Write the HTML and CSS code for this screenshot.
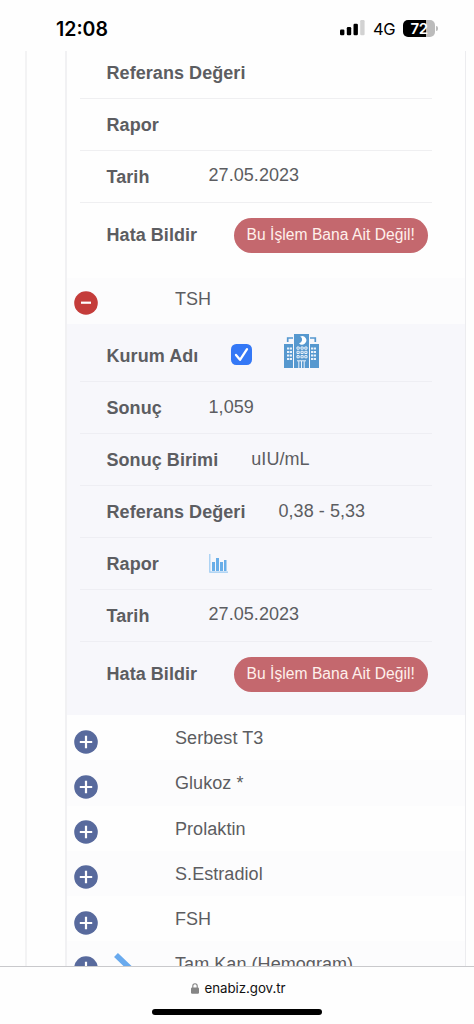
FILE: index.html
```html
<!DOCTYPE html>
<html lang="tr">
<head>
<meta charset="utf-8">
<title>e-Nabız</title>
<link rel="stylesheet" href="styles.css">
</head>
<body>
<svg class="defs" width="0" height="0">
  <symbol id="plus" viewBox="0 0 24 24"><circle cx="12" cy="12" r="11.8" fill="#586a9d"/><path d="M12 5.8v12.4M5.8 12h12.4" stroke="#fff" stroke-width="2.2"/></symbol>
  <symbol id="minus" viewBox="0 0 24 24"><circle cx="12" cy="12" r="11.8" fill="#c43c3a"/><path d="M7 11.7h10" stroke="#fff" stroke-width="2.2"/></symbol>
</svg>
<div class="phone">
  <header class="status">
    <span class="clock">12:08</span>
    <svg class="signal" width="25" height="16" viewBox="0 0 25 16"><rect x="0" y="9.5" width="4.4" height="5.7" rx="1.2"/><rect x="6.8" y="7" width="4.4" height="8.2" rx="1.2"/><rect x="13.5" y="3.8" width="4.4" height="11.4" rx="1.2"/><rect x="20.2" y="0" width="4.4" height="15.2" rx="1.2" fill="#d2d2d2"/></svg>
    <span class="net">4G</span>
    <span class="battery"><span class="level">72</span></span>
    <span class="cap"></span>
  </header>

  <main class="page">
    <div class="outer">
      <div class="table">
        <dl class="details first">
          <div class="row"><dt>Referans Değeri</dt></div>
          <div class="row"><dt>Rapor</dt></div>
          <div class="row"><dt>Tarih</dt><dd class="date">27.05.2023</dd></div>
          <div class="row report"><dt>Hata Bildir</dt><dd><button class="btn">Bu İşlem Bana Ait Değil!</button></dd></div>
        </dl>
        <div class="test open"><svg class="toggle"><use href="#minus"/></svg><span>TSH</span></div>
        <dl class="details tinted">
          <div class="row place"><dt>Kurum Adı</dt><dd class="place-icons">
            <svg width="21" height="21" viewBox="0 0 21 21"><rect width="21" height="21" rx="5.2" fill="#3478f6"/><path d="M5 11l4 4.8L16 5.2" fill="none" stroke="#fff" stroke-width="2.3" stroke-linecap="round" stroke-linejoin="round"/></svg>
            <svg class="hospital" width="35" height="36" viewBox="0 0 35 36">
              <g fill="#5698cf"><path d="M10 1h15v34H10z"/><path d="M0 11h9v24H0zM26 11h9v24h-9z"/></g>
              <path d="M3.7 9V5H9M31.3 9V5H26" fill="none" stroke="#5698cf" stroke-width="1.7"/>
              <path d="M16.2 3.6a4.2 4.2 0 1 1-1.2 6.6a3.5 3.5 0 0 0 1.2-6.6" fill="#fff"/>
              <path d="M3 15.5h5M3 19h5M3 22.5h5M3 26h5M27 15.5h5M27 19h5M27 22.5h5M27 26h5" stroke="#e9f1fa" stroke-width="1.9" stroke-dasharray="2.2 .6"/>
              <g fill="none" stroke="#e9f1fa" stroke-width="1"><path d="M13 14h2.2v2.2H13zM17 14h2.2v2.2H17zM20.8 14H23v2.2h-2.2zM13 18.3h2.2v2.2H13zM17 18.3h2.2v2.2H17zM20.8 18.3H23v2.2h-2.2zM13 22.6h2.2v2.2H13zM17 22.6h2.2v2.2H17zM20.8 22.6H23v2.2h-2.2z"/><path d="M13 27.8h9M14.8 28v7M17.5 28v7M20.2 28v7"/></g>
            </svg></dd></div>
          <div class="row"><dt>Sonuç</dt><dd>1,059</dd></div>
          <div class="row"><dt>Sonuç Birimi</dt><dd>uIU/mL</dd></div>
          <div class="row"><dt>Referans Değeri</dt><dd>0,38 - 5,33</dd></div>
          <div class="row"><dt>Rapor</dt><dd><svg class="chart" width="19" height="19" viewBox="0 0 19 19"><path d="M.8 0v18.2H19" fill="none" stroke="#9bcaf2" stroke-width="1.2"/><path d="M3 8h3v9H3zM7 4h3v13H7zM11 8h3v9h-3zM15 6h2.5v11H15z" fill="#69aee8"/></svg></dd></div>
          <div class="row"><dt>Tarih</dt><dd class="date">27.05.2023</dd></div>
          <div class="row report"><dt>Hata Bildir</dt><dd><button class="btn">Bu İşlem Bana Ait Değil!</button></dd></div>
        </dl>
        <div class="tests">
          <div class="test"><svg class="toggle"><use href="#plus"/></svg><span>Serbest T3</span></div>
          <div class="test"><svg class="toggle"><use href="#plus"/></svg><span>Glukoz *</span></div>
          <div class="test"><svg class="toggle"><use href="#plus"/></svg><span>Prolaktin</span></div>
          <div class="test"><svg class="toggle"><use href="#plus"/></svg><span>S.Estradiol</span></div>
          <div class="test"><svg class="toggle"><use href="#plus"/></svg><span>FSH</span></div>
          <div class="test"><svg class="toggle"><use href="#plus"/></svg><svg class="chevron" width="20" height="28" viewBox="0 0 20 28"><path d="M3 3l11.5 11L3 25" fill="none" stroke="#69aaee" stroke-width="5.6"/></svg><span>Tam Kan (Hemogram)</span></div>
        </div>
      </div>
    </div>
  </main>

  <footer class="browser">
    <div class="address"><svg width="8" height="11" viewBox="0 0 8 11"><rect y="4.4" width="8" height="6.4" rx="1.2" fill="#858585"/><path d="M1.8 5V3a2.2 2.2 0 0 1 4.4 0v2" fill="none" stroke="#858585" stroke-width="1.1"/></svg><span>enabiz.gov.tr</span></div>
    <div class="home"></div>
  </footer>
</div>
</body>
</html>
```
FILE: styles.css
```css
* { box-sizing: border-box; }
body { margin: 0; background: #fefefe; color: #5c5d61; font: 18px/22px "Liberation Sans", Arial, sans-serif; letter-spacing: .06px; }
.defs { position: absolute; }
.phone { width: 474px; height: 1024px; display: flex; flex-direction: column; overflow: hidden; }

.status { height: 51px; flex: none; display: flex; align-items: center; padding: 5px 36px 0 56px; color: #000; font-family: Inter, sans-serif; }
.clock { font-size: 19.5px; font-weight: 600; letter-spacing: 0; margin-right: auto; padding-top: 1px; }
.signal { margin-right: 8px; }
.net { width: 30px; font-size: 16.5px; font-weight: 400; letter-spacing: -.3px; padding-top: 1px; }
.battery { width: 32px; height: 17px; border-radius: 5px; background: linear-gradient(90deg, #000 72%, #bbb 72%); display: flex; justify-content: center; align-items: center; }
.level { color: #fff; font-size: 15px; font-weight: 600; line-height: 17px; letter-spacing: -.4px; }
.cap { width: 2px; height: 5px; margin-left: 1px; border-radius: 0 2px 2px 0; background: #bbb; }

.page { height: 915px; flex: none; overflow: hidden; padding-left: 25px; }
.outer { min-height: 100%; border-left: 2px solid #f3f3f4; padding: 0 8px 0 38px; }
.table { display: flow-root; border-left: 2px solid #f1f1f3; border-right: 1px solid #ececef; }

.details { margin: 0; padding: 0 33px 0 13px; }
.first { margin-top: -4px; }
.row { height: 52px; display: flex; align-items: center; padding: 1px 0 0 26.5px; border-bottom: 1px solid #efeff1; }
.row dt { min-width: 69px; margin-right: 33px; font-weight: 700; white-space: nowrap; }
.row dd { margin: -3px 0 0; white-space: nowrap; }
.row dd.date { margin-top: -4px; }
.first .report { height: 75px; }
.report { height: 73px; align-items: flex-start; padding-top: 21px; border: 0; }
.row.report dt { margin-right: 36.5px; }
.row.report dd { margin: -6px 0 0; }
.btn { display: block; width: 194px; height: 35px; padding: 0 0 1px; border: 0; border-radius: 18px; background: #c4686e; color: #fff0eb; font: 15.6px/20px "Liberation Sans", Arial, sans-serif; letter-spacing: .04px; white-space: nowrap; }
.tinted { background: #f7f7fb; }
.tinted .row { border-color: #eeeef3; }
.row.place { height: 58px; padding-top: 6px; }
.place-icons { display: flex; align-items: center; gap: 32px; }
.hospital { margin-top: -7px; }
.chart { display: block; margin-top: 1px; }

.test { height: 45.3px; display: flex; position: relative; padding: 12px 0 0 6.5px; }
.test span { margin-left: 77.5px; white-space: nowrap; }
.toggle { width: 24px; height: 24px; margin-top: 2.6px; flex: none; }
.open { height: 46px; padding-top: 10px; background: #fcfcfd; }
.tests .test:nth-child(even) { background: #fcfcfd; }
.chevron { position: absolute; left: 46px; top: 11px; }

.browser { flex: 1; border-top: 1px solid #c9c9cc; color: #111; display: flex; flex-direction: column; align-items: center; }
.address { display: flex; align-items: center; gap: 6px; margin-top: 10px; font: 13.3px/22px Inter, sans-serif; letter-spacing: -.05px; padding-left: 2px; }
.home { width: 170px; height: 6px; margin-top: 10px; border-radius: 3px; background: #000; }
```
